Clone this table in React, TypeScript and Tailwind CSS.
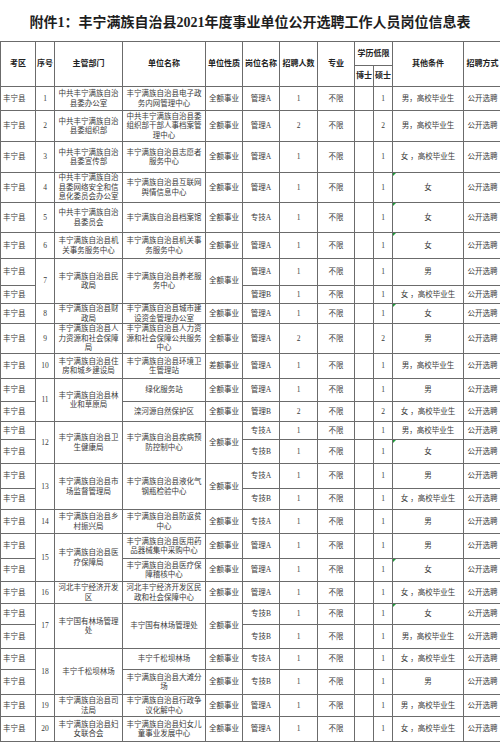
import React from 'react';

type C = string | [string, number];

interface Row {
  h: number;
  cells: C[];
  mark?: boolean;
}

const COL_CLASSES = [
  'w-[35px]', 'w-[19px]', 'w-[68px]', 'w-[83px]', 'w-[37px]', 'w-[37px]',
  'w-[38px]', 'w-[37px]', 'w-[19px]', 'w-[19px]', 'w-[71px]', 'w-[38px]',
];

const X = '丰宁县';
const P = '公开选聘';
const Q = '全额事业';
const NM = '男，高校毕业生';
const NF = '女 ，高校毕业生';

const ROWS: Row[] = [
  { h: 24, cells: [X, '1', '中共丰宁满族自治县委办公室', '丰宁满族自治县电子政务内网管理中心', Q, '管理A', '1', '不限', '', '1', NM, P] },
  { h: 31, cells: [X, '2', '中共丰宁满族自治县委组织部', '中共丰宁满族自治县委组织部干部人事档案管理中心', Q, '管理A', '2', '不限', '', '2', NM, P] },
  { h: 31, cells: [X, '3', '中共丰宁满族自治县委宣传部', '丰宁满族自治县志愿者服务中心', Q, '管理A', '1', '不限', '', '1', NF, P] },
  { h: 30, mark: true, cells: [X, '4', '中共丰宁满族自治县委网络安全和信息化委员会办公室', '丰宁满族自治县互联网舆情信息中心', Q, '管理A', '1', '不限', '', '1', '女', P] },
  { h: 30, mark: true, cells: [X, '5', '中共丰宁满族自治县委员会', '丰宁满族自治县档案馆', Q, '专技A', '1', '不限', '', '1', '女', P] },
  { h: 26, mark: true, cells: [X, '6', '丰宁满族自治县机关事务服务中心', '丰宁满族自治县机关事务服务中心', Q, '管理A', '1', '不限', '', '1', '女', P] },
  { h: 27, cells: [X, ['7', 2], ['丰宁满族自治县民政局', 2], ['丰宁满族自治县养老服务中心', 2], [Q, 2], '管理A', '1', '不限', '', '1', '男', P] },
  { h: 18, cells: [X, '管理B', '1', '不限', '', '1', NF, P] },
  { h: 19, mark: true, cells: [X, '8', '丰宁满族自治县财政局', '丰宁满族自治县城市建设资金管理办公室', Q, '管理A', '1', '不限', '', '1', '女', P] },
  { h: 30, cells: [X, '9', '丰宁满族自治县人力资源和社会保障局', '丰宁满族自治县人力资源和社会保障公共服务中心', Q, '管理A', '2', '不限', '', '2', '男', P] },
  { h: 25, cells: [X, '10', '丰宁满族自治县住房和城乡建设局', '丰宁满族自治县环境卫生管理站', '差额事业', '管理A', '1', '不限', '', '1', NM, P] },
  { h: 23, cells: [X, ['11', 2], ['丰宁满族自治县林业和草原局', 2], '绿化服务站', Q, '管理A', '1', '不限', '', '1', '男', P] },
  { h: 20, cells: [X, '滦河源自然保护区', Q, '管理B', '2', '不限', '', '2', NF, P] },
  { h: 18, cells: [X, ['12', 2], ['丰宁满族自治县卫生健康局', 2], ['丰宁满族自治县疾病预防控制中心', 2], [Q, 2], '专技A', '1', '不限', '', '1', NM, P] },
  { h: 24, mark: true, cells: [X, '专技B', '1', '不限', '', '1', '女', P] },
  { h: 25, cells: [X, ['13', 2], ['丰宁满族自治县市场监督管理局', 2], ['丰宁满族自治县液化气钢瓶检验中心', 2], [Q, 2], '专技A', '1', '不限', '', '1', '男', P] },
  { h: 21, cells: [X, '专技B', '1', '不限', '', '1', NF, P] },
  { h: 24, cells: [X, '14', '丰宁满族自治县乡村振兴局', '丰宁满族自治县防返贫中心', Q, '专技A', '1', '不限', '', '1', '男', P] },
  { h: 25, cells: [X, ['15', 2], ['丰宁满族自治县医疗保障局', 2], '丰宁满族自治县医用药品器械集中采购中心', Q, '管理A', '1', '不限', '', '1', '男', P] },
  { h: 23, mark: true, cells: [X, '丰宁满族自治县医疗保障稽核中心', Q, '管理A', '1', '不限', '', '1', '女', P] },
  { h: 22, cells: [X, '16', '河北丰宁经济开发区', '河北丰宁经济开发区民政和社会保障中心', Q, '管理A', '1', '不限', '', '1', NF, P] },
  { h: 21, mark: true, cells: [X, ['17', 2], ['丰宁国有林场管理处', 2], ['丰宁国有林场管理处', 2], [Q, 2], '专技B', '1', '不限', '', '1', '女', P] },
  { h: 24, cells: [X, '专技B', '1', '不限', '', '1', NM, P] },
  { h: 21, cells: [X, ['18', 2], ['丰宁千松坝林场', 2], '丰宁千松坝林场', Q, '专技A', '1', '不限', '', '1', NF, P] },
  { h: 25, cells: [X, '丰宁满族自治县大滩分场', Q, '专技B', '1', '不限', '', '1', '男', P] },
  { h: 22, cells: [X, '19', '丰宁满族自治县司法局', '丰宁满族自治县行政争议化解中心', Q, '管理A', '1', '不限', '', '1', '男 ，高校毕业生', P] },
  { h: 25, cells: [X, '20', '丰宁满族自治县妇女联合会', '丰宁满族自治县妇女儿童事业发展中心', Q, '管理A', '1', '不限', '', '1', NF, P] },
];

const ROW_H: Record<number, string> = {
  18: 'h-[18px]', 19: 'h-[19px]', 20: 'h-[20px]', 21: 'h-[21px]', 22: 'h-[22px]', 23: 'h-[23px]',
  24: 'h-[24px]', 25: 'h-[25px]', 26: 'h-[26px]', 27: 'h-[27px]', 30: 'h-[30px]', 31: 'h-[31px]',
};

const FONT = "font-['Liberation_Serif','Noto_Sans_CJK_SC',serif]";
const BORDER = 'border border-[#6b6b6b] py-0 align-middle';

function HeaderCell({ children, rowSpan, colSpan }: { children?: React.ReactNode; rowSpan?: number; colSpan?: number }) {
  return (
    <th
      rowSpan={rowSpan}
      colSpan={colSpan}
      className={`${BORDER} px-0 text-center whitespace-nowrap font-bold text-[8px] leading-[10px] text-[#222]`}
    >
      {children}
    </th>
  );
}

export default function App() {
  return (
    <div className={`w-[500px] h-[743px] overflow-hidden bg-white ${FONT}`}>
      <div className="h-[41px] flex items-center justify-center pt-[3px]">
        <h1 className="text-[14px] font-bold text-[#1e1e1e] whitespace-nowrap">
          附件1：丰宁满族自治县2021年度事业单位公开选聘工作人员岗位信息表
        </h1>
      </div>
      <table className="border-collapse table-fixed w-[501px]">
        <colgroup>
          {COL_CLASSES.map((c, i) => (
            <col key={i} className={c} />
          ))}
        </colgroup>
        <thead>
          <tr className="h-[24px]">
            <HeaderCell rowSpan={2}>考区</HeaderCell>
            <HeaderCell rowSpan={2}>序号</HeaderCell>
            <HeaderCell rowSpan={2}>主管部门</HeaderCell>
            <HeaderCell rowSpan={2}>单位名称</HeaderCell>
            <HeaderCell rowSpan={2}>单位性质</HeaderCell>
            <HeaderCell rowSpan={2}>岗位名称</HeaderCell>
            <HeaderCell rowSpan={2}>招聘人数</HeaderCell>
            <HeaderCell rowSpan={2}>专业</HeaderCell>
            <HeaderCell colSpan={2}>学历低限</HeaderCell>
            <HeaderCell rowSpan={2}>其他条件</HeaderCell>
            <HeaderCell rowSpan={2}>招聘方式</HeaderCell>
          </tr>
          <tr className="h-[21px]">
            <HeaderCell>博士</HeaderCell>
            <HeaderCell>硕士</HeaderCell>
          </tr>
        </thead>
        <tbody>
          {ROWS.map((row, ri) => (
            <tr key={ri} className={ROW_H[row.h]}>
              {row.cells.map((c, ci) => {
                const text = typeof c === 'string' ? c : c[0];
                const rs = typeof c === 'string' ? undefined : c[1];
                const isFirst = ci === 0;
                const isOther = ci === row.cells.length - 2;
                return (
                  <td
                    key={ci}
                    rowSpan={rs}
                    className={`${BORDER} px-[3px] text-[7.5px] leading-[9.5px] text-[#3a3a3a] ${isFirst ? 'text-left pl-[2px]' : 'text-center'} ${isOther && row.mark ? 'relative' : ''}`}
                  >
                    {isOther && row.mark && (
                      <span className="absolute left-0 top-0 w-0 h-0 border-t-[3px] border-r-[3px] border-t-[#1f9a3a] border-r-transparent" />
                    )}
                    {text}
                  </td>
                );
              })}
            </tr>
          ))}
        </tbody>
      </table>
    </div>
  );
}
